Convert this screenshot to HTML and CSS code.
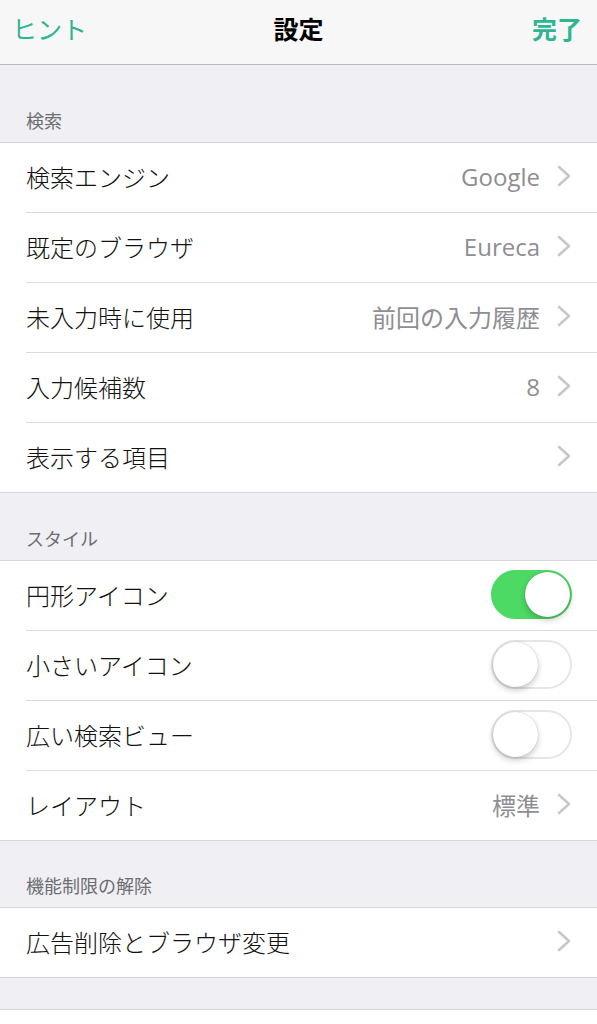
FILE: index.html
```html
<!DOCTYPE html>
<html lang="ja">
<head>
<meta charset="utf-8">
<title>設定</title>
<link rel="stylesheet" href="styles.css">
</head>
<body>
<header class="navbar">
  <span class="nav-btn nav-left">ヒント</span>
  <span class="nav-title">設定</span>
  <span class="nav-btn nav-right">完了</span>
</header>

<div class="section-header first">検索</div>
<div class="group">
  <div class="row"><div class="row-inner"><span class="label">検索エンジン</span><span class="value">Google</span><svg class="chev" viewBox="0 0 14 22"><polyline points="2,2 12,11 2,20"/></svg></div></div>
  <div class="row"><div class="row-inner"><span class="label">既定のブラウザ</span><span class="value">Eureca</span><svg class="chev" viewBox="0 0 14 22"><polyline points="2,2 12,11 2,20"/></svg></div></div>
  <div class="row"><div class="row-inner"><span class="label">未入力時に使用</span><span class="value">前回の入力履歴</span><svg class="chev" viewBox="0 0 14 22"><polyline points="2,2 12,11 2,20"/></svg></div></div>
  <div class="row"><div class="row-inner"><span class="label">入力候補数</span><span class="value">8</span><svg class="chev" viewBox="0 0 14 22"><polyline points="2,2 12,11 2,20"/></svg></div></div>
  <div class="row"><div class="row-inner"><span class="label">表示する項目</span><svg class="chev" viewBox="0 0 14 22"><polyline points="2,2 12,11 2,20"/></svg></div></div>
</div>

<div class="section-header">スタイル</div>
<div class="group">
  <div class="row"><div class="row-inner"><span class="label">円形アイコン</span><span class="toggle on"><span class="knob"></span></span></div></div>
  <div class="row"><div class="row-inner"><span class="label">小さいアイコン</span><span class="toggle"><span class="knob"></span></span></div></div>
  <div class="row"><div class="row-inner"><span class="label">広い検索ビュー</span><span class="toggle"><span class="knob"></span></span></div></div>
  <div class="row"><div class="row-inner"><span class="label">レイアウト</span><span class="value">標準</span><svg class="chev" viewBox="0 0 14 22"><polyline points="2,2 12,11 2,20"/></svg></div></div>
</div>

<div class="section-header compact">機能制限の解除</div>
<div class="group">
  <div class="row"><div class="row-inner"><span class="label">広告削除とブラウザ変更</span><svg class="chev" viewBox="0 0 14 22"><polyline points="2,2 12,11 2,20"/></svg></div></div>
</div>

<div class="spacer"></div>
<div class="group tail"></div>
</body>
</html>
```
FILE: styles.css
```css
html, body {
  margin: 0;
  padding: 0;
}
body {
  background: #efeff4;
  font-family: "Liberation Sans", "Noto Sans CJK JP", sans-serif;
  color: #111;
  width: 597px;
  overflow: hidden;
}
.navbar {
  height: 65px;
  box-sizing: border-box;
  background: #f7f7f8;
  border-bottom: 1px solid #b9b9bd;
  display: flex;
  align-items: center;
  justify-content: space-between;
  padding: 0 15px 8px 12px;
  position: relative;
}
.nav-btn {
  font-size: 25px;
  color: #2fb591;
}
.nav-left {
  font-weight: 400;
}
.nav-right {
  font-weight: 700;
}
.nav-title {
  font-size: 25px;
  font-weight: 700;
  color: #000;
  position: absolute;
  left: 0;
  right: 0;
  text-align: center;
  top: 10px;
  pointer-events: none;
}
.section-header {
  height: 67px;
  box-sizing: border-box;
  display: flex;
  align-items: flex-end;
  padding: 0 26px 9px;
  font-size: 18px;
  color: #6d6d72;
}
.section-header.first {
  height: 77px;
}
.section-header.compact {
  height: 66px;
}
.group {
  background: #fff;
  border-top: 1px solid #d6d6da;
  border-bottom: 1px solid #d6d6da;
}
.row {
  padding-left: 26px;
}
.row-inner {
  height: 66px;
  padding-bottom: 3px;
  display: flex;
  align-items: center;
  padding-right: 26px;
  border-bottom: 1px solid #dcdce0;
}
.row:last-child .row-inner {
  border-bottom: none;
}
.label {
  font-size: 24px;
  font-weight: 300;
  flex: 1;
  white-space: nowrap;
}
.value {
  font-family: "Open Sans", "Noto Sans CJK JP", sans-serif;
  font-size: 24px;
  font-weight: 400;
  color: #8e8e93;
  margin-right: 17px;
  white-space: nowrap;
}
.chev {
  width: 14px;
  height: 22px;
  flex: none;
}
.chev polyline {
  fill: none;
  stroke: #c7c7cc;
  stroke-width: 2.6;
  stroke-linecap: round;
  stroke-linejoin: round;
}
.toggle {
  width: 81px;
  height: 49px;
  box-sizing: border-box;
  border-radius: 25px;
  border: 2px solid #e6e6e9;
  background: #fff;
  position: relative;
  flex: none;
  margin-right: -1px;
}
.toggle .knob {
  position: absolute;
  top: 0;
  left: 0;
  width: 45px;
  height: 45px;
  border-radius: 50%;
  background: #fff;
  box-shadow: 0 3px 6px rgba(0,0,0,0.22), 0 0 1px rgba(0,0,0,0.25);
}
.toggle.on {
  background: #4cd964;
  border-color: #4cd964;
}
.toggle.on .knob {
  left: auto;
  right: 0;
}
.spacer {
  height: 31px;
}
.group.tail {
  height: 40px;
  border-bottom: none;
}
```
